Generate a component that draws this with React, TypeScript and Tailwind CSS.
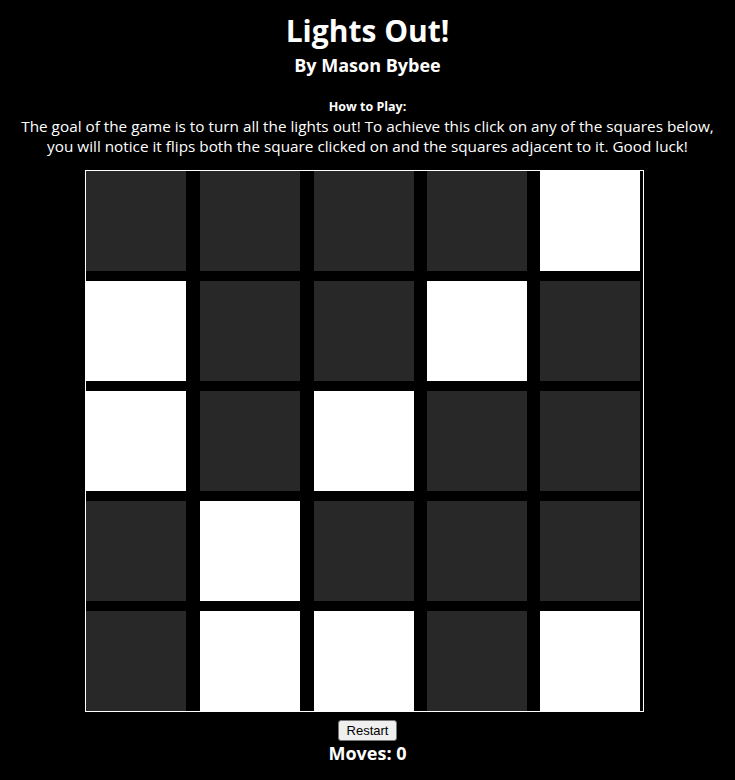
import React, { useState } from 'react';

const initialBoard: number[][] = [
  [0, 0, 0, 0, 1],
  [1, 0, 0, 1, 0],
  [1, 0, 1, 0, 0],
  [0, 1, 0, 0, 0],
  [0, 1, 1, 0, 1],
];

export default function App() {
  const [board, setBoard] = useState(initialBoard);
  const [moves, setMoves] = useState(0);

  // flip the clicked square and its neighbours
  const toggle = (r: number, c: number) => {
    const next = board.map((row) => [...row]);
    const spots = [[r, c], [r - 1, c], [r + 1, c], [r, c - 1], [r, c + 1]];
    spots.forEach(([y, x]) => {
      if (y >= 0 && y < 5 && x >= 0 && x < 5) next[y][x] = next[y][x] ? 0 : 1;
    });
    setBoard(next);
    setMoves(moves + 1);
  };

  const restart = () => {
    setBoard(initialBoard);
    setMoves(0);
  };

  return (
    <div className="min-h-[780px] bg-black text-white text-center font-['Open_Sans',sans-serif]">
      <h1 className="pt-[12px] text-[30px] leading-[38px] font-bold">Lights Out!</h1>
      <h2 className="mt-[3px] text-[18px] leading-[24px] font-bold">By Mason Bybee</h2>
      <div className="mt-[21px] text-[12.5px] leading-[18px] font-bold">How to Play:</div>
      <p className="text-[15.3px] leading-[20px]">
        The goal of the game is to turn all the lights out! To achieve this click on any of the squares below,
        <br />
        you will notice it flips both the square clicked on and the squares adjacent to it. Good luck!
      </p>
      <div className="ml-[85px] mt-[14px] w-[559px] border border-white pr-[3px]">
        <div className="grid grid-cols-[114px_114px_113px_113px_100px] gap-y-[10px]">
          {board.map((row, r) =>
            row.map((on, c) => (
              <div
                key={`${r}-${c}`}
                onClick={() => toggle(r, c)}
                className={`h-[100px] w-[100px] cursor-pointer ${on ? 'bg-white' : 'bg-[#282828]'}`}
              />
            ))
          )}
        </div>
      </div>
      <button
        onClick={restart}
        className="mt-[8px] rounded-[3px] border border-[#767676] bg-[#efefef] px-[8px] py-[2px] text-[13px] leading-[15px] text-black font-['Liberation_Sans',sans-serif]"
      >
        Restart
      </button>
      <div className="mt-[1px] text-[18px] leading-[22px] font-bold">Moves: {moves}</div>
    </div>
  );
}
